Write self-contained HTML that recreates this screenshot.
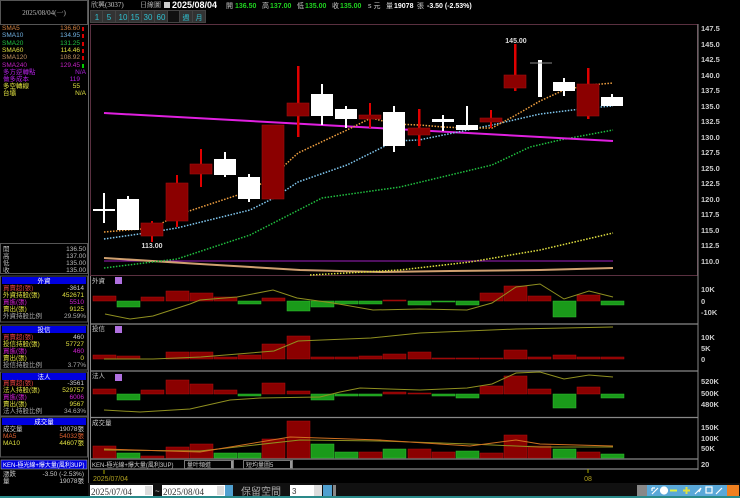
<!DOCTYPE html>
<html><head><meta charset="utf-8"><style>
html,body{margin:0;padding:0;background:#000;width:740px;height:498px;overflow:hidden}
svg{display:block}
text{font-family:"Liberation Sans","Noto Sans CJK TC",sans-serif}
.s{font-family:"Liberation Serif","Noto Serif CJK SC",serif}
</style></head><body>
<svg width="740" height="498" viewBox="0 0 740 498" xmlns="http://www.w3.org/2000/svg">
<rect width="740" height="498" fill="#000"/>
<!-- left panel -->
<rect x="0.5" y="0.5" width="87" height="24" fill="none" stroke="#555"/>
<text x="44" y="15" font-size="7" fill="#bbb" text-anchor="middle" class="s">2025/08/04(一)</text>
<line x1="88.5" y1="0" x2="88.5" y2="498" stroke="#666"/>
<g font-size="6.5" class="s">
<text x="2" y="30" fill="#d08040">SMA5</text><text x="80" y="30" fill="#d08040" text-anchor="end">136.60</text>
<text x="2" y="37" fill="#70b0e0">SMA10</text><text x="80" y="37" fill="#70b0e0" text-anchor="end">134.95</text>
<text x="2" y="45" fill="#20c040">SMA20</text><text x="80" y="45" fill="#20c040" text-anchor="end">131.25</text>
<text x="2" y="52" fill="#e0e040">SMA60</text><text x="80" y="52" fill="#e0e040" text-anchor="end">114.46</text>
<text x="2" y="59" fill="#c09060">SMA120</text><text x="80" y="59" fill="#c09060" text-anchor="end">108.92</text>
<text x="2" y="67" fill="#c020c0">SMA240</text><text x="80" y="67" fill="#c020c0" text-anchor="end">129.45</text>
<text x="3" y="74" fill="#b020e0">多方逆轉點</text><text x="86" y="74" fill="#b020e0" text-anchor="end">N/A</text>
<text x="3" y="81" fill="#b020e0">做多成本</text><text x="80" y="81" fill="#b020e0" text-anchor="end">119</text>
<text x="3" y="88" fill="#e0e040">多空轉線</text><text x="80" y="88" fill="#e0e040" text-anchor="end">55</text>
<text x="3" y="95" fill="#e0e040">台壩</text><text x="86" y="95" fill="#e0e040" text-anchor="end">N/A</text>
</g>
<g fill="#d00"><rect x="82" y="27" width="2" height="4"/><rect x="82" y="34" width="2" height="4"/><rect x="82" y="42" width="2" height="4"/><rect x="82" y="49" width="2" height="4"/><rect x="82" y="56" width="2" height="4"/></g>
<rect x="82" y="64" width="2" height="4" fill="#0c0"/>
<rect x="0.5" y="243.5" width="87" height="30" fill="none" stroke="#555"/>
<g font-size="6.5" fill="#bbb" class="s">
<text x="3" y="251">開</text><text x="86" y="251" text-anchor="end">136.50</text>
<text x="3" y="258">高</text><text x="86" y="258" text-anchor="end">137.00</text>
<text x="3" y="265">低</text><text x="86" y="265" text-anchor="end">135.00</text>
<text x="3" y="272">收</text><text x="86" y="272" text-anchor="end">135.00</text>
</g>
<!-- 外資 -->
<g class="s" font-size="6.5">
<rect x="2" y="277" width="84" height="7" fill="#0000e0"/><text x="44" y="283" fill="#fff" text-anchor="middle">外資</text>
<text x="3" y="290" fill="#e04040">買賣超(張)</text><text x="84" y="290" fill="#ccc" text-anchor="end">-3614</text>
<text x="3" y="297" fill="#e0e040">外資持股(張)</text><text x="84" y="297" fill="#e0e040" text-anchor="end">452671</text>
<text x="3" y="304" fill="#d020d0">買進(張)</text><text x="84" y="304" fill="#d020d0" text-anchor="end">5510</text>
<text x="3" y="311" fill="#e0e040">賣出(張)</text><text x="84" y="311" fill="#e0e040" text-anchor="end">9125</text>
<text x="3" y="318" fill="#aaa">外資持股比例</text><text x="86" y="318" fill="#aaa" text-anchor="end">29.59%</text>
<rect x="0.5" y="276" width="87" height="46" fill="none" stroke="#555"/>
<rect x="2" y="326" width="84" height="7" fill="#0000e0"/><text x="44" y="332" fill="#fff" text-anchor="middle">投信</text>
<text x="3" y="339" fill="#e04040">買賣超(張)</text><text x="84" y="339" fill="#ccc" text-anchor="end">460</text>
<text x="3" y="346" fill="#e0e040">投信持股(張)</text><text x="84" y="346" fill="#e0e040" text-anchor="end">57727</text>
<text x="3" y="353" fill="#d020d0">買進(張)</text><text x="84" y="353" fill="#d020d0" text-anchor="end">460</text>
<text x="3" y="360" fill="#e0e040">賣出(張)</text><text x="84" y="360" fill="#e0e040" text-anchor="end">0</text>
<text x="3" y="367" fill="#aaa">投信持股比例</text><text x="86" y="367" fill="#aaa" text-anchor="end">3.77%</text>
<rect x="0.5" y="325" width="87" height="45" fill="none" stroke="#555"/>
<rect x="2" y="373" width="84" height="7" fill="#0000e0"/><text x="44" y="379" fill="#fff" text-anchor="middle">法人</text>
<text x="3" y="385" fill="#e04040">買賣超(張)</text><text x="84" y="385" fill="#ccc" text-anchor="end">-3561</text>
<text x="3" y="392" fill="#e0e040">法人持股(張)</text><text x="84" y="392" fill="#e0e040" text-anchor="end">529757</text>
<text x="3" y="399" fill="#d020d0">買進(張)</text><text x="84" y="399" fill="#d020d0" text-anchor="end">6006</text>
<text x="3" y="406" fill="#e0e040">賣出(張)</text><text x="84" y="406" fill="#e0e040" text-anchor="end">9567</text>
<text x="3" y="413" fill="#aaa">法人持股比例</text><text x="86" y="413" fill="#aaa" text-anchor="end">34.63%</text>
<rect x="0.5" y="372" width="87" height="44" fill="none" stroke="#555"/>
<rect x="2" y="418" width="84" height="7" fill="#0000e0"/><text x="44" y="424" fill="#fff" text-anchor="middle">成交量</text>
<text x="3" y="431" fill="#ccc">成交量</text><text x="84" y="431" fill="#ccc" text-anchor="end">19078張</text>
<text x="3" y="438" fill="#e06030">MA5</text><text x="84" y="438" fill="#e06030" text-anchor="end">54032張</text>
<text x="3" y="445" fill="#e0e040">MA10</text><text x="84" y="445" fill="#e0e040" text-anchor="end">44607張</text>
<rect x="0.5" y="417" width="87" height="40" fill="none" stroke="#555"/>
<rect x="1" y="460" width="86" height="9" fill="#0000e0" stroke="#aaa" stroke-width="0.6"/><text x="3" y="467" fill="#fff" font-size="6">KEN-極光線+爆大量(風利3UP)</text>
<text x="3" y="476" fill="#ccc">漲跌</text><text x="84" y="476" fill="#ccc" text-anchor="end">-3.50 (-2.53%)</text>
<text x="3" y="483" fill="#ccc">量</text><text x="84" y="483" fill="#ccc" text-anchor="end">19078張</text>
</g>
<!-- top bar -->
<text x="91" y="7" font-size="7" fill="#ccc" class="s">欣興(3037)</text>
<text x="140" y="7" font-size="7" fill="#ccc" class="s">日線圖</text>
<rect x="164" y="2" width="6" height="6" fill="#ccc"/>
<text x="172" y="8" font-size="9" font-weight="bold" fill="#fff">2025/08/04</text>
<g font-size="7" font-weight="bold">
<text x="226" y="8" fill="#ccc" font-weight="normal">開</text><text x="235" y="8" fill="#20d020">136.50</text>
<text x="262" y="8" fill="#ccc" font-weight="normal">高</text><text x="270" y="8" fill="#20d020">137.00</text>
<text x="297" y="8" fill="#ccc" font-weight="normal">低</text><text x="305" y="8" fill="#20d020">135.00</text>
<text x="332" y="8" fill="#ccc" font-weight="normal">收</text><text x="340" y="8" fill="#20d020">135.00</text>
<text x="368" y="8" fill="#ccc" font-weight="normal">s 元</text>
<text x="386" y="8" fill="#ccc" font-weight="normal">量</text><text x="394" y="8" fill="#fff">19078</text>
<text x="417" y="8" fill="#ccc" font-weight="normal">張</text><text x="427" y="8" fill="#fff">-3.50 (-2.53%)</text>
</g>
<rect x="90" y="10" width="116" height="13" fill="#444"/>
<g font-size="8" fill="#30c0d0" text-anchor="middle">
<rect x="91" y="11" width="11" height="11" fill="#333"/><text x="97" y="20">1</text>
<rect x="103" y="11" width="12" height="11" fill="#333"/><text x="109" y="20">5</text>
<rect x="116" y="11" width="12" height="11" fill="#333"/><text x="123" y="20">10</text>
<rect x="129" y="11" width="12" height="11" fill="#333"/><text x="135" y="20">15</text>
<rect x="142" y="11" width="12" height="11" fill="#333"/><text x="148" y="20">30</text>
<rect x="155" y="11" width="12" height="11" fill="#333"/><text x="161" y="20">60</text>
<rect x="168" y="11" width="11" height="11" fill="#111"/>
<rect x="180" y="11" width="12" height="11" fill="#333"/><text x="186" y="20" font-size="7">週</text>
<rect x="193" y="11" width="12" height="11" fill="#333"/><text x="199" y="20" font-size="7">月</text>
</g>
<!-- main frame -->
<rect x="90.5" y="24.5" width="607" height="251" fill="none" stroke="#5a3040"/>
<line x1="698" y1="24" x2="698" y2="470" stroke="#888"/>
<g font-size="7.5" fill="#ccc" font-weight="bold">
<text x="701" y="31">147.5</text><text x="701" y="47">145.0</text><text x="701" y="62">142.5</text><text x="701" y="78">140.0</text><text x="701" y="93">137.5</text><text x="701" y="109">135.0</text><text x="701" y="124">132.5</text><text x="701" y="140">130.0</text><text x="701" y="155">127.5</text><text x="701" y="171">125.0</text><text x="701" y="186">122.5</text><text x="701" y="202">120.0</text><text x="701" y="217">117.5</text><text x="701" y="233">115.0</text><text x="701" y="248">112.5</text><text x="701" y="264">110.0</text>
<text x="701" y="292">10K</text><text x="701" y="304">0</text><text x="701" y="315">-10K</text>
<text x="701" y="340">10K</text><text x="701" y="351">5K</text><text x="701" y="362">0</text>
<text x="701" y="384">520K</text><text x="701" y="396">500K</text><text x="701" y="407">480K</text>
<text x="701" y="430">150K</text><text x="701" y="441">100K</text><text x="701" y="451">50K</text><text x="701" y="467">20</text>
</g>
<!-- MA lines -->
<line x1="104" y1="261" x2="613" y2="261" stroke="#a020c0" stroke-width="1"/>
<polyline points="104,258 200,264 300,270 380,272 450,271 540,270 613,268" fill="none" stroke="#d0a070" stroke-width="2"/>
<polyline points="310,275 400,270 470,262 540,250 613,233" fill="none" stroke="#e0e040" stroke-width="1.5" stroke-dasharray="1.5,1.5"/>
<polyline points="104,268 177,259 250,235 322,198 400,187 492,165 530,147 560,140 613,130" fill="none" stroke="#20c040" stroke-width="1.5" stroke-dasharray="1.5,1.5"/>
<line x1="104" y1="113" x2="613" y2="141" stroke="#e020e0" stroke-width="2"/>
<polyline points="104,239 153,232 177,228 250,210 274,198 298,182 347,165 395,141 419,140 492,125 540,114 589,108 613,106" fill="none" stroke="#80c8f0" stroke-width="1.5" stroke-dasharray="1.5,1.5"/>
<polyline points="104,232 153,228 177,215 250,191 274,175 298,153 347,130 371,118 395,124 419,125 443,127 467,128 492,128 516,115 540,101 564,90 589,85 613,83" fill="none" stroke="#f0a040" stroke-width="1.5" stroke-dasharray="1.5,1.5"/>
<!-- candles -->
<g fill="#fff">
<rect x="103" y="193" width="2" height="30"/><rect x="93" y="209" width="22" height="2"/>
<rect x="127" y="196" width="2" height="4"/><rect x="117" y="199" width="22" height="31"/>
<rect x="224" y="152" width="2" height="25"/><rect x="214" y="159" width="22" height="16"/>
<rect x="248" y="174" width="2" height="28"/><rect x="238" y="177" width="22" height="22"/>
<rect x="321" y="84" width="2" height="41"/><rect x="311" y="94" width="22" height="22"/>
<rect x="345" y="106" width="2" height="22"/><rect x="335" y="109" width="22" height="10"/>
<rect x="393" y="106" width="2" height="46"/><rect x="383" y="112" width="22" height="34"/>
<rect x="442" y="115" width="2" height="16"/><rect x="432" y="119" width="22" height="3"/>
<rect x="466" y="106" width="2" height="24"/><rect x="456" y="125" width="22" height="5"/>
<rect x="538" y="60" width="4" height="37"/>
<rect x="563" y="78" width="2" height="18"/><rect x="553" y="82" width="22" height="9"/>
<rect x="611" y="94" width="2" height="12"/><rect x="601" y="97" width="22" height="9"/>
</g>
<line x1="530" y1="63" x2="552" y2="63" stroke="#888"/>
<g fill="#e00000">
<rect x="151" y="221" width="2" height="21"/><rect x="176" y="175" width="2" height="52"/><rect x="200" y="149" width="2" height="38"/>
<rect x="297" y="66" width="2.5" height="71"/><rect x="369" y="103" width="2" height="25"/><rect x="418" y="109" width="2.5" height="37"/>
<rect x="490" y="110" width="2" height="18"/><rect x="514" y="44" width="2.5" height="47"/><rect x="587" y="68" width="2.5" height="51"/>
</g>
<g fill="#8b0000" stroke="#a01010" stroke-width="0.6">
<rect x="141" y="223" width="22" height="13"/><rect x="166" y="183" width="22" height="38"/><rect x="190" y="164" width="22" height="10"/>
<rect x="262" y="125" width="22" height="74"/><rect x="287" y="103" width="22" height="13"/><rect x="359" y="115" width="22" height="4"/>
<rect x="408" y="128" width="22" height="7"/><rect x="480" y="118" width="22" height="4"/><rect x="504" y="75" width="22" height="13"/><rect x="577" y="84" width="22" height="32"/>
</g>
<g font-size="7" font-weight="bold" fill="#ddd" text-anchor="middle" class="s">
<text x="152" y="248">113.00</text><text x="516" y="43">145.00</text>
</g>
<!-- panel separators -->
<g stroke="#888" stroke-width="1.2">
<line x1="90" y1="324" x2="698" y2="324"/><line x1="90" y1="371" x2="698" y2="371"/><line x1="90" y1="417.5" x2="698" y2="417.5"/>
<line x1="90" y1="459" x2="698" y2="459"/><line x1="90" y1="469" x2="698" y2="469"/>
</g>
<line x1="90.5" y1="276" x2="90.5" y2="469" stroke="#888"/>
<g font-size="6.5" fill="#ccc" class="s">
<text x="92" y="283">外資</text><text x="92" y="331">投信</text><text x="92" y="378">法人</text><text x="92" y="425">成交量</text>
</g>
<g fill="#b070e0"><rect x="115" y="277" width="7" height="7"/><rect x="115" y="326" width="7" height="7"/><rect x="115" y="374" width="7" height="7"/></g>
<!-- panel bars: green -->
<g fill="#1a9a1a" stroke="#30c030" stroke-width="0.5">
<rect x="117" y="301" width="23" height="6"/><rect x="238" y="301" width="23" height="3"/><rect x="287" y="301" width="23" height="10"/><rect x="311" y="301" width="23" height="6"/>
<rect x="335" y="301" width="23" height="3"/><rect x="359" y="301" width="23" height="3"/><rect x="408" y="301" width="23" height="4"/><rect x="432" y="301" width="23" height="1"/><rect x="456" y="301" width="23" height="4"/>
<rect x="553" y="301" width="23" height="16"/><rect x="601" y="301" width="23" height="4"/>
<rect x="117" y="394" width="23" height="6"/><rect x="238" y="394" width="23" height="2"/><rect x="311" y="394" width="23" height="6"/><rect x="335" y="394" width="23" height="2"/><rect x="359" y="394" width="23" height="2"/>
<rect x="432" y="394" width="23" height="2"/><rect x="456" y="394" width="23" height="4"/><rect x="553" y="394" width="23" height="14"/><rect x="601" y="394" width="23" height="4"/>
<rect x="117" y="453" width="23" height="5"/><rect x="214" y="453" width="23" height="5"/><rect x="238" y="453" width="23" height="5"/><rect x="311" y="444" width="23" height="14"/><rect x="335" y="452" width="23" height="6"/>
<rect x="383" y="449" width="23" height="9"/><rect x="456" y="451" width="23" height="7"/><rect x="553" y="449" width="23" height="9"/><rect x="601" y="454" width="23" height="4"/>
</g>
<g fill="#8b0000" stroke="#b01010" stroke-width="0.5">
<rect x="93" y="296" width="23" height="5"/><rect x="141" y="297" width="23" height="4"/><rect x="166" y="291" width="23" height="10"/><rect x="190" y="293" width="23" height="8"/><rect x="214" y="297" width="23" height="4"/><rect x="262" y="298" width="23" height="3"/><rect x="383" y="300" width="23" height="1"/>
<rect x="480" y="293" width="23" height="8"/><rect x="504" y="286" width="23" height="15"/><rect x="528" y="296" width="23" height="5"/><rect x="577" y="295" width="23" height="6"/>
<rect x="93" y="355" width="23" height="4"/><rect x="117" y="356" width="23" height="3"/><rect x="166" y="352" width="23" height="7"/><rect x="190" y="352" width="23" height="7"/><rect x="214" y="357" width="23" height="2"/><rect x="238" y="355" width="23" height="4"/><rect x="262" y="344" width="23" height="15"/><rect x="287" y="336" width="23" height="23"/>
<rect x="311" y="357" width="23" height="2"/><rect x="335" y="357" width="23" height="2"/><rect x="359" y="356" width="23" height="3"/><rect x="383" y="354" width="23" height="5"/><rect x="408" y="352" width="23" height="7"/><rect x="432" y="358" width="23" height="1"/><rect x="456" y="358" width="23" height="1"/><rect x="480" y="358" width="23" height="1"/>
<rect x="504" y="350" width="23" height="9"/><rect x="528" y="357" width="23" height="2"/><rect x="553" y="355" width="23" height="4"/><rect x="577" y="357" width="23" height="2"/><rect x="601" y="357" width="23" height="2"/>
<rect x="93" y="389" width="23" height="5"/><rect x="141" y="390" width="23" height="4"/><rect x="166" y="380" width="23" height="14"/><rect x="190" y="384" width="23" height="10"/><rect x="214" y="390" width="23" height="4"/><rect x="262" y="383" width="23" height="11"/><rect x="287" y="391" width="23" height="3"/><rect x="383" y="392" width="23" height="2"/><rect x="408" y="393" width="23" height="1"/>
<rect x="480" y="386" width="23" height="8"/><rect x="504" y="376" width="23" height="18"/><rect x="528" y="389" width="23" height="5"/><rect x="577" y="387" width="23" height="7"/>
<rect x="93" y="446" width="23" height="12"/><rect x="141" y="456" width="23" height="2"/><rect x="166" y="447" width="23" height="11"/><rect x="190" y="444" width="23" height="14"/><rect x="262" y="439" width="23" height="19"/><rect x="287" y="421" width="23" height="37"/><rect x="359" y="452" width="23" height="6"/><rect x="408" y="449" width="23" height="9"/><rect x="432" y="452" width="23" height="6"/>
<rect x="480" y="453" width="23" height="5"/><rect x="504" y="435" width="23" height="23"/><rect x="528" y="446" width="23" height="12"/><rect x="577" y="452" width="23" height="6"/>
</g>
<!-- panel lines -->
<g fill="none" stroke="#909020" stroke-width="1">
<polyline points="105,314 130,319 153,316 190,304 200,300 237,297 273,290 297,298 333,303 373,310 420,309 467,310 492,303 516,287 540,284 564,299 589,291 613,297"/>
<polyline points="104,359 153,359 201,357 250,353 274,351 298,341 322,340 371,338 420,333 467,331 516,329 613,327"/>
<polyline points="104,410 140,412 190,409 230,400 260,398 320,397 340,392 360,388 420,390 467,388 492,384 516,373 540,372 564,379 589,375 613,377"/>
<polyline points="104,450 200,451 300,440 380,441 470,444 516,446 540,447 613,447"/>
</g>
<g fill="none" stroke="#d07020" stroke-width="1">
<polyline points="104,449 200,452 290,437 380,440 470,446 516,440 540,444 613,446"/>
</g>
<!-- dropdown row -->
<g font-size="6" fill="#ccc" class="s">
<text x="92" y="467">KEN-極光線+爆大量(風利3UP)</text>
<rect x="184.5" y="460.5" width="49" height="8" fill="none" stroke="#777"/><text x="187" y="467">量叶頻道</text><rect x="231" y="461" width="2" height="7" fill="#999"/>
<rect x="243.5" y="460.5" width="49" height="8" fill="none" stroke="#777"/><text x="246" y="467">短均量圖5</text><rect x="290" y="461" width="2" height="7" fill="#999"/>
</g>
<line x1="104" y1="470" x2="104" y2="474" stroke="#aa0"/>
<text x="93" y="481" font-size="7" fill="#b0a020">2025/07/04</text>
<line x1="588" y1="469" x2="588" y2="473" stroke="#aa0"/>
<text x="588" y="481" font-size="7" fill="#b0a020" text-anchor="middle">08</text>
<!-- bottom bar -->
<rect x="88" y="483" width="652" height="13" fill="#111"/>
<rect x="90" y="485" width="63" height="11" fill="#fff"/><text x="91" y="495" font-size="9" fill="#333" class="s">2025/07/04</text><rect x="145" y="486" width="7" height="9" fill="#ddd"/>
<text x="155" y="494" font-size="8" fill="#ccc">~</text>
<rect x="162" y="485" width="63" height="11" fill="#fff"/><text x="163" y="495" font-size="9" fill="#333" class="s">2025/08/04</text><rect x="217" y="486" width="7" height="9" fill="#ddd"/>
<rect x="225" y="485" width="8" height="11" fill="#50a0d0"/>
<text x="241" y="495" font-size="10" fill="#aaa">保留空間</text>
<rect x="290" y="485" width="24" height="11" fill="#fff"/><text x="292" y="494" font-size="8" fill="#333">3</text><rect x="314" y="485" width="8" height="11" fill="#ddd"/>
<rect x="323" y="485" width="9" height="11" fill="#50a0d0"/><rect x="333" y="485" width="3" height="11" fill="#888"/>
<rect x="637" y="485" width="10" height="11" fill="#888"/>
<rect x="647" y="485" width="80" height="11" fill="#5aa8d8"/>
<g fill="none" stroke="#fff" stroke-width="1.2">
<path d="M652 494 L658 488 M652 488 L652 491 M652 488 L655 488"/>
<circle cx="664" cy="490.5" r="3.5" fill="#fff"/>
<path d="M670 490.5 H677" stroke="#e0f040" stroke-width="2"/>
<path d="M683 490.5 H690 M686.5 487 V494" stroke="#e0e040" stroke-width="2"/>
<path d="M695 494 L701 488 L699 492"/>
<rect x="706" y="487" width="6" height="6"/>
<path d="M716 494 L722 488"/>
</g>
<rect x="727" y="485" width="12" height="11" fill="#f08020"/>
<rect x="0" y="496" width="740" height="2" fill="#2a8a8a"/>
</svg>
</body></html>
